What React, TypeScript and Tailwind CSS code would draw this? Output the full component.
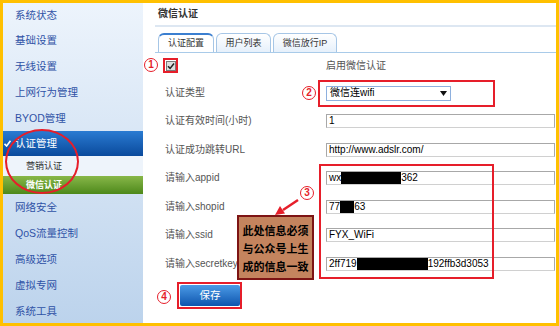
const topMenu = ["系统状态", "基础设置", "无线设置", "上网行为管理", "BYOD管理"]
const bottomMenu = ["网络安全", "QoS流量控制", "高级选项", "虚拟专网", "系统工具"]

const Sidebar = () => {
  return (
    <aside className="w-[140px] shrink-0 overflow-hidden bg-linear-to-b from-[#edf4fc] to-[#bcd3ec] text-[10.5px] text-[#2f52a6]">
      {topMenu.map((label, i) => (
        <div
          key={label}
          className={`flex items-center pl-[12px] leading-none ${i === 0 ? "h-[24px]" : "h-[26px]"}`}
        >
          {label}
        </div>
      ))}
      <div className="flex h-[25px] items-center bg-linear-to-b from-[#2a7bd2] to-[#0a4a9c] leading-none text-white">
        <svg width="7" height="7" viewBox="0 0 7 7" className="ml-[1px]">
          <path d="M0.5 3.8 L2.6 6 L6.5 0.8" fill="none" stroke="white" strokeWidth="1.6" />
        </svg>
        <span className="ml-[4px]">认证管理</span>
      </div>
      <div className="flex h-[20px] items-center bg-[#eef4fb] pl-[23px] text-[9px] leading-none text-[#333]">
        营销认证
      </div>
      <div className="flex h-[18px] items-center bg-linear-to-b from-[#88b748] to-[#4d8919] pl-[23px] text-[9px] font-bold leading-none text-white">
        微信认证
      </div>
      {bottomMenu.map((label) => (
        <div key={label} className="flex h-[26px] items-center pl-[12px] leading-none">
          {label}
        </div>
      ))}
    </aside>
  )
}

const Tab = ({ label, width, active }: { label: string; width: string; active?: boolean }) => (
  <div
    className={`flex h-[19px] items-center justify-center rounded-t-[6px] border border-b-0 border-[#a6c6e6] text-[9px] leading-none text-[#333] ${width} ${
      active ? "border-t-2 border-t-[#3b7fd0] bg-white" : "bg-linear-to-b from-white to-[#e6f0fb]"
    }`}
  >
    {label}
  </div>
)

const Field = ({ children }: { children: React.ReactNode }) => (
  <div className="mr-[1px] flex h-[14px] flex-1 items-center border border-[#a8a8a8] border-b-[#d0d0d0] bg-white pl-[2px] text-[10px] leading-none text-black">
    {children}
  </div>
)

const Row = ({ label, children }: { label: string; children: React.ReactNode }) => (
  <div className="flex h-[28.5px] items-center">
    <div className="w-[171px] pl-[10px] text-[10px] leading-none text-[#555]">{label}</div>
    {children}
  </div>
)

const Redact = ({ w }: { w: string }) => <span className={`inline-block h-[12px] bg-black ${w}`} />

const Main = () => {
  return (
    <main className="flex flex-1 flex-col pl-[12px]">
      <div className="flex h-[22px] items-center pl-[3px] text-[10px] font-bold leading-none text-[#333]">
        微信认证
      </div>
      <div className="h-[2px] bg-[#dde7f2]" />
      <div className="mt-[6px] flex h-[20px] items-end gap-[2px] border-b border-[#a9cbe9] pl-[3px]">
        <Tab label="认证配置" width="w-[56px]" active />
        <Tab label="用户列表" width="w-[55px]" />
        <Tab label="微信放行IP" width="w-[64px]" />
      </div>

      <div className="flex h-[26px] items-center">
        <div className="w-[171px] pl-[11px]">
          <div className="flex h-[10px] w-[10px] items-center justify-center border border-[#7a7a7a] bg-[#dedede]">
            <svg width="8" height="8" viewBox="0 0 8 8">
              <path d="M1 4.3 L3.1 6.4 L7 1.5" fill="none" stroke="#222" strokeWidth="1.5" />
            </svg>
          </div>
        </div>
        <span className="text-[10px] leading-none text-[#555]">启用微信认证</span>
      </div>

      <div className="flex h-[28px] items-center">
        <div className="w-[171px] pl-[10px] text-[10px] leading-none text-[#555]">认证类型</div>
        <div className="flex h-[15px] w-[125px] items-center justify-between border border-[#8eb0de] bg-white px-[3px] text-[10px] leading-none text-black">
          <span>微信连wifi</span>
          <svg width="7" height="5" viewBox="0 0 7 5">
            <path d="M0 0 L7 0 L3.5 5 Z" fill="#111" />
          </svg>
        </div>
      </div>

      <Row label="认证有效时间(小时)">
        <Field>1</Field>
      </Row>
      <Row label="认证成功跳转URL">
        <Field>http://www.adslr.com/</Field>
      </Row>
      <Row label="请输入appid">
        <Field>
          wx
          <Redact w="w-[60px]" />
          362
        </Field>
      </Row>
      <Row label="请输入shopid">
        <Field>
          77
          <Redact w="w-[14px]" />
          63
        </Field>
      </Row>
      <Row label="请输入ssid">
        <Field>FYX_WiFi</Field>
      </Row>
      <Row label="请输入secretkey">
        <Field>
          2ff719
          <Redact w="w-[71px]" />
          192ffb3d3053
        </Field>
      </Row>

      <div className="pl-[25px] pt-[7px]">
        <button className="flex h-[21px] w-[60px] items-center justify-center rounded-[2px] bg-linear-to-b from-[#4b9be6] to-[#0c55ae] text-[10.5px] leading-none text-white">
          保存
        </button>
      </div>
    </main>
  )
}

const Num = ({ n, className }: { n: number; className: string }) => (
  <span
    className={`absolute flex h-[14px] w-[14px] items-center justify-center rounded-full border-[1.5px] border-[#e61e2a] bg-white text-[10px] font-bold leading-none text-[#e61e2a] ${className}`}
  >
    {n}
  </span>
)

const Annotations = () => (
  <div className="pointer-events-none absolute inset-0">
    <div className="absolute left-[5px] top-[129px] h-[65px] w-[74px] rounded-[50%] border-2 border-[#e61e2a]" />
    <div className="absolute left-[163px] top-[58px] h-[15px] w-[15px] border-2 border-[#e61e2a]" />
    <div className="absolute left-[318px] top-[80px] h-[27px] w-[177px] border-2 border-[#e61e2a]" />
    <div className="absolute left-[319px] top-[164px] h-[115px] w-[175px] border-2 border-[#e61e2a]" />
    <div className="absolute left-[177px] top-[282px] h-[27px] w-[65px] border-2 border-[#e61e2a]" />
    <Num n={1} className="left-[144px] top-[58px]" />
    <Num n={2} className="left-[302px] top-[86px]" />
    <Num n={3} className="left-[300px] top-[186px]" />
    <Num n={4} className="left-[157px] top-[290px]" />
    <svg className="absolute left-0 top-0" width="559" height="326">
      <line x1="298" y1="200" x2="283" y2="210" stroke="#e61e2a" strokeWidth="2.5" />
      <polygon points="275,215 285,213.5 280,206" fill="#e61e2a" />
    </svg>
    <div className="absolute left-[237px] top-[215px] flex h-[65px] w-[77px] flex-col items-center justify-center border-2 border-[#7d1414] bg-[#c4845e] pt-[2px] text-[11px] font-bold leading-[18px] text-black">
      <span>此处信息必须</span>
      <span>与公众号上生</span>
      <span>成的信息一致</span>
    </div>
  </div>
)

export default function App() {
  return (
    <div className="relative h-[326px] w-[559px] overflow-hidden bg-white font-['Liberation_Sans','Noto_Sans_CJK_SC',sans-serif]">
      <div className="flex h-full w-full border-[3px] border-[#ffc000]">
        <Sidebar />
        <Main />
      </div>
      <Annotations />
    </div>
  )
}
